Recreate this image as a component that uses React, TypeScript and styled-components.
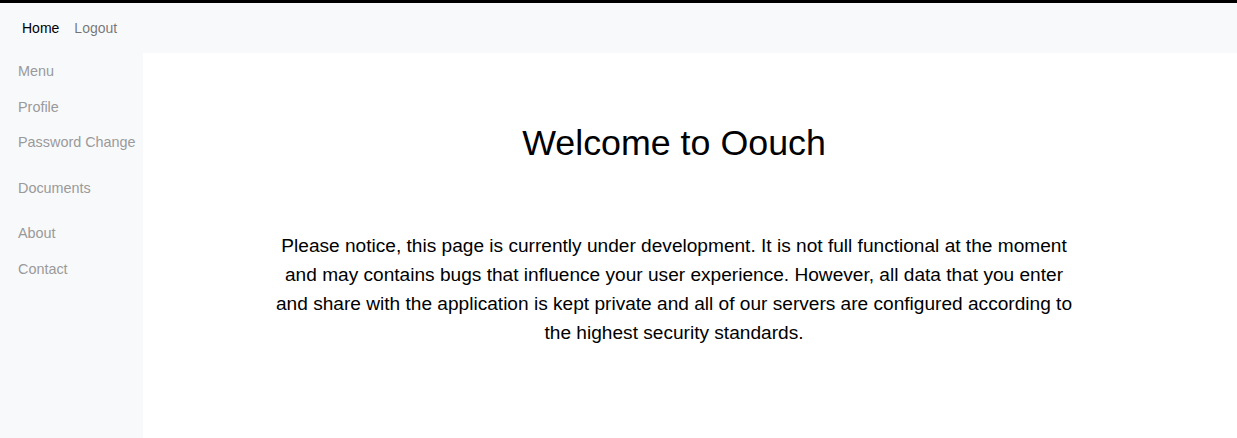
import React from "react";
import styled, { createGlobalStyle } from "styled-components";

const GlobalStyle = createGlobalStyle`
  html, body {
    margin: 0;
    padding: 0;
    background: #ffffff;
    font-family: "Liberation Sans", Arial, sans-serif;
  }
`;

const Page = styled.div`
  border-top: 3px solid #000;
  height: 435px;
  display: flex;
  flex-direction: column;
  background: #f8f9fa;
`;

const TopBar = styled.nav`
  height: 50px;
  display: flex;
  align-items: center;
  gap: 15px;
  padding: 0 22px;
  background: #f8f9fa;
`;

const TopLink = styled.a<{ $active?: boolean }>`
  font-size: 14px;
  color: ${(p) => (p.$active ? "#000" : "rgba(0, 0, 0, 0.55)")};
  text-decoration: none;
`;

const Body = styled.div`
  flex: 1;
  display: flex;
`;

const Sidebar = styled.aside`
  width: 143px;
  flex-shrink: 0;
  padding: 8px 0 0 18px;
  box-sizing: border-box;
  display: flex;
  flex-direction: column;
`;

const SideLink = styled.a<{ $gapAfter?: boolean }>`
  font-size: 14.4px;
  color: #9a9a9a;
  text-decoration: none;
  line-height: 20px;
  padding: 0 0 15.5px;
  margin-bottom: ${(p) => (p.$gapAfter ? "10px" : "0")};
`;

const Main = styled.main`
  flex: 1;
  background: #fff;
  padding: 69px 32px 0 0;
  display: flex;
  flex-direction: column;
  align-items: center;
`;

const Title = styled.h1`
  margin: 0;
  font-weight: 400;
  font-size: 35.8px;
  line-height: 42px;
  color: #000;
`;

const Notice = styled.p`
  margin: 67px 0 0;
  max-width: 800px;
  text-align: center;
  font-size: 19.1px;
  line-height: 29px;
  color: #000;
`;

export default function App() {
  return (
    <>
      <GlobalStyle />
      <Page>
        <TopBar>
          <TopLink href="#" $active>
            Home
          </TopLink>
          <TopLink href="#">Logout</TopLink>
        </TopBar>
        <Body>
          <Sidebar>
            <SideLink href="#">Menu</SideLink>
            <SideLink href="#">Profile</SideLink>
            <SideLink href="#" $gapAfter>
              Password Change
            </SideLink>
            <SideLink href="#" $gapAfter>
              Documents
            </SideLink>
            <SideLink href="#">About</SideLink>
            <SideLink href="#">Contact</SideLink>
          </Sidebar>
          <Main>
            <Title>Welcome to Oouch</Title>
            <Notice>
              Please notice, this page is currently under development. It is
              not full functional at the moment and may contains bugs that
              influence your user experience. However, all data that you enter
              and share with the application is kept private and all of our
              servers are configured according to the highest security
              standards.
            </Notice>
          </Main>
        </Body>
      </Page>
    </>
  );
}
